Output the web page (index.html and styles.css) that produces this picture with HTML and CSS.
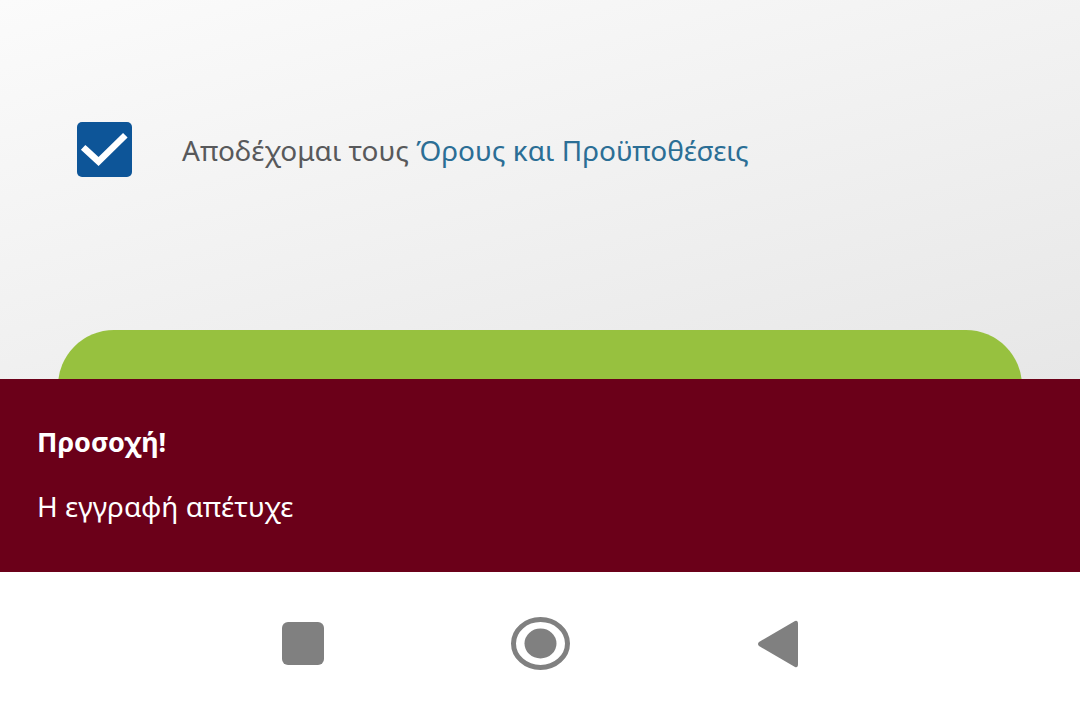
FILE: index.html
```html
<!DOCTYPE html>
<html lang="el">
<head>
    <meta charset="UTF-8">
    <meta name="viewport" content="width=device-width, initial-scale=1.0">
    <title>Εγγραφή</title>
    <link rel="stylesheet" href="styles.css">
</head>
<body>

    <div class="screen">
        <main class="form-area">
            <label class="terms-row">
                <span class="checkbox" aria-hidden="true">
                    <svg viewBox="0 0 55 55" width="55" height="55">
                        <path d="M8.5 27.5 L21.5 39.5 L46 15.5" fill="none" stroke="#ffffff" stroke-width="6.5" stroke-linecap="square"/>
                    </svg>
                </span>
                <span class="terms-text">Αποδέχομαι τους <a href="#" class="terms-link">Όρους και Προϋποθέσεις</a></span>
            </label>

            <button class="submit-btn" type="button" aria-label="Εγγραφή"></button>
        </main>

        <div class="alert" role="alert">
            <p class="alert-title">Προσοχή!</p>
            <p class="alert-msg">Η εγγραφή απέτυχε</p>
        </div>

        <nav class="nav-bar">
            <span class="nav-recent"></span>
            <svg class="nav-home" viewBox="0 0 59 53" width="59" height="53">
                <ellipse cx="29.5" cy="26.5" rx="27" ry="24" fill="none" stroke="#808080" stroke-width="5"/>
                <ellipse cx="29.5" cy="26.5" rx="16" ry="15" fill="#808080"/>
            </svg>
            <svg class="nav-back" viewBox="0 0 41 50" width="41" height="50">
                <path d="M38 2 Q41 1 41 5 L41 45 Q41 49 38 48 L2 27 Q0 25 2 23 Z" fill="#808080"/>
            </svg>
        </nav>
    </div>

</body>
</html>
```

FILE: styles.css
```css
:root {
    --bg-top: #fbfbfb;
    --bg-bottom: #e7e7e7;
    --text: #58595b;
    --link: #2b6e95;
    --check: #0d5598;
    --green: #97c13f;
    --alert: #6b0019;
    --nav-icon: #808080;
}

* {
    box-sizing: border-box;
    margin: 0;
    padding: 0;
}

body {
    font-family: 'Noto Sans', 'Open Sans', sans-serif;
    background: #ffffff;
    width: 1080px;
    height: 715px;
    overflow: hidden;
}

.screen {
    display: flex;
    flex-direction: column;
    height: 715px;
}

.form-area {
    height: 379px;
    overflow: hidden;
    padding: 122px 58px 0;
    background: linear-gradient(165deg, var(--bg-top) 0%, #f2f2f2 45%, var(--bg-bottom) 100%);
}

.terms-row {
    display: flex;
    align-items: center;
    gap: 50px;
    padding-left: 19px;
    cursor: pointer;
}

.checkbox {
    width: 55px;
    height: 55px;
    border-radius: 5px;
    background: var(--check);
    display: flex;
    flex-shrink: 0;
}

.terms-text {
    font-size: 28px;
    color: var(--text);
    letter-spacing: 0;
}

.terms-link {
    color: var(--link);
    text-decoration: none;
}

.submit-btn {
    display: block;
    width: 964px;
    height: 112px;
    margin-top: 153px;
    border: none;
    border-radius: 56px;
    background: var(--green);
}

.alert {
    height: 193px;
    background: var(--alert);
    color: #ffffff;
    padding: 45px 37px 0;
}

.alert-title {
    font-size: 27px;
    font-weight: 700;
    line-height: 1.3;
}

.alert-msg {
    font-size: 28px;
    margin-top: 29px;
    line-height: 1.3;
}

.nav-bar {
    flex: 1;
    background: #ffffff;
    display: flex;
    align-items: center;
    justify-content: center;
    gap: 187px;
}

.nav-recent {
    width: 42px;
    height: 43px;
    border-radius: 6px;
    background: var(--nav-icon);
}
```
